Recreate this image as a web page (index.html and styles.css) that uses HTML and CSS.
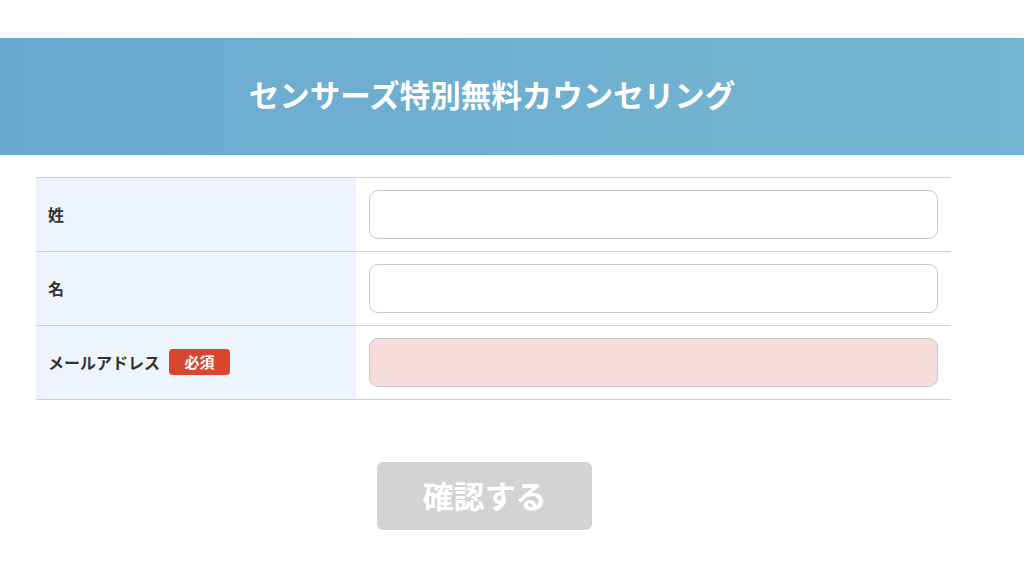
FILE: index.html
```html
<!DOCTYPE html>
<html lang="ja">
<head>
<meta charset="utf-8">
<link rel="stylesheet" href="styles.css">
</head>
<body>
<header class="hero">
  <h1 class="hero-title">センサーズ特別無料カウンセリング</h1>
</header>
<main class="form">
  <div class="row">
    <div class="label">姓</div>
    <div class="field"><div class="input"></div></div>
  </div>
  <div class="row">
    <div class="label">名</div>
    <div class="field"><div class="input"></div></div>
  </div>
  <div class="row">
    <div class="label">メールアドレス<span class="badge">必須</span></div>
    <div class="field"><div class="input input-error"></div></div>
  </div>
</main>
<div class="actions">
  <div class="submit">確認する</div>
</div>
</body>
</html>
```
FILE: styles.css
```css
html, body {
  margin: 0;
  padding: 0;
  background: #fff;
  font-family: "Noto Sans CJK JP", "Noto Sans", sans-serif;
}
.hero {
  margin-top: 38px;
  height: 117px;
  background: linear-gradient(90deg, #6aaad0 0%, #74b6d1 100%);
  display: flex;
  align-items: center;
  justify-content: center;
}
.hero-title {
  margin: 0;
  color: #fff;
  font-size: 30.5px;
  font-weight: 700;
  padding-right: 40px;
  transform: translateY(-3px);
}
.form {
  margin: 22px 0 0 36px;
  width: 915px;
  border-top: 1px solid #cfcfcf;
}
.row {
  display: flex;
  height: 73px;
  border-bottom: 1px solid #cfcfcf;
}
.label {
  width: 308px;
  padding-left: 12px;
  padding-bottom: 2px;
  background: #eef4fb;
  display: flex;
  align-items: center;
  font-size: 16px;
  font-weight: 700;
  color: #333;
}
.badge {
  margin-left: 9px;
  background: #d9452f;
  color: #fff;
  font-size: 15px;
  font-weight: 700;
  border-radius: 4px;
  width: 61px;
  height: 26px;
  display: inline-flex;
  align-items: center;
  justify-content: center;
}
.field {
  flex: 1;
  padding: 0 13px;
  display: flex;
  align-items: center;
}
.input {
  width: 100%;
  height: 47px;
  border: 1px solid #c8c8c8;
  border-radius: 9px;
  background: #fff;
}
.input-error {
  background: #f7dcdc;
}
.actions {
  margin: 62px 0 0 377px;
}
.submit {
  width: 215px;
  height: 68px;
  padding-bottom: 4px;
  box-sizing: border-box;
  background: #d3d3d3;
  border-radius: 6px;
  color: #fff;
  font-size: 31px;
  font-weight: 700;
  display: flex;
  align-items: center;
  justify-content: center;
}
```
